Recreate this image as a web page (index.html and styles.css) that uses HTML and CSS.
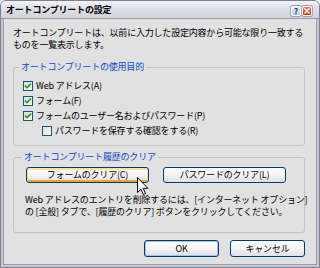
FILE: index.html
```html
<!DOCTYPE html>
<html lang="ja">
<head>
    <meta charset="UTF-8">
    <title>オートコンプリートの設定</title>
    <link rel="stylesheet" href="styles.css">
</head>
<body>
    <div class="ventana">
        <div class="barra">
            <span class="titulo">オートコンプリートの設定</span>
            <span class="boton-barra ayuda">?</span>
            <span class="boton-barra cerrar">
                <svg width="6" height="6" viewBox="0 0 6 6"><path d="M0.5 0.5 L5.5 5.5 M5.5 0.5 L0.5 5.5" stroke="#fff" stroke-width="1.4"/></svg>
            </span>
        </div>
        <div class="cliente">
            <p class="intro">オートコンプリートは、以前に入力した設定内容から可能な限り一致する<br>ものを一覧表示します。</p>

            <fieldset class="grupo grupo-uso">
                <legend>オートコンプリートの使用目的</legend>
                <div class="filas">
                    <div class="fila"><span class="caja"><svg width="8" height="8" viewBox="0 0 8 8"><polyline points="1,3.6 3,5.6 7,1.6" fill="none" stroke="#21a121" stroke-width="1.7"/></svg></span>Web アドレス(A)</div>
                    <div class="fila"><span class="caja"><svg width="8" height="8" viewBox="0 0 8 8"><polyline points="1,3.6 3,5.6 7,1.6" fill="none" stroke="#21a121" stroke-width="1.7"/></svg></span>フォーム(F)</div>
                    <div class="fila"><span class="caja"><svg width="8" height="8" viewBox="0 0 8 8"><polyline points="1,3.6 3,5.6 7,1.6" fill="none" stroke="#21a121" stroke-width="1.7"/></svg></span>フォームのユーザー名およびパスワード(P)</div>
                    <div class="fila sub"><span class="caja"></span>パスワードを保存する確認をする(R)</div>
                </div>
            </fieldset>

            <fieldset class="grupo grupo-borrar">
                <legend>オートコンプリート履歴のクリア</legend>
                <div class="botones-borrar">
                    <button class="boton foco">フォームのクリア(C)</button>
                    <button class="boton">パスワードのクリア(L)</button>
                </div>
                <p class="nota">Web アドレスのエントリを削除するには、[インターネット オプション]<br>の [全般] タブで、[履歴のクリア] ボタンをクリックしてください。</p>
            </fieldset>

            <div class="acciones">
                <button class="boton chico defecto">OK</button>
                <button class="boton chico">キャンセル</button>
            </div>
        </div>
        <svg class="cursor" width="12" height="19" viewBox="0 0 12 19"><path d="M0.5 0.5 V15.5 L4 12.2 L6.4 17.6 L8.6 16.6 L6.2 11.3 H10.8 Z" fill="#fff" stroke="#000" stroke-width="1"/></svg>
    </div>
</body>
</html>
```

FILE: styles.css
```css
* {
    box-sizing: border-box;
}

body {
    margin: 0;
    background: #fff;
}

.ventana {
    position: relative;
    width: 320px;
    height: 268px;
    display: flex;
    flex-direction: column;
    background: #c6c7d1;
    border: 1px solid #7f7f8e;
    border-radius: 6px 6px 0 0;
    overflow: hidden;
    font-family: "Noto Sans CJK JP", sans-serif;
    font-size: 9px;
    line-height: 10px;
    letter-spacing: -0.2px;
    color: #000;
}

.barra {
    height: 18px;
    display: flex;
    align-items: center;
    padding: 0 7px 0 5px;
    background: linear-gradient(#f2f3f7, #dfe0e8 45%, #d1d3dd);
    border-bottom: 1px solid #9a9aa8;
}

.titulo {
    flex: 1;
    font-weight: bold;
    white-space: nowrap;
}

.boton-barra {
    width: 10px;
    height: 10px;
    margin-left: 1px;
    margin-top: 3px;
    display: flex;
    align-items: center;
    justify-content: center;
    border: 1px solid #fff;
    border-radius: 2px;
    box-shadow: 0 0 0 1px #9da3b8;
    letter-spacing: 0;
}

.ayuda {
    background: linear-gradient(#eef1fa, #c3c9dc);
    color: #1b2f7a;
    font-weight: bold;
    font-size: 8px;
}

.cerrar {
    background: linear-gradient(#ee8a6c, #d4472a 60%, #c23a1f);
}

.cliente {
    flex: 1;
    margin: 0 2px 2px;
    padding: 8px 11px 0 9px;
    background: #e1e1e1;
    border: 1px solid #9a9aa8;
    border-top: none;
}

.intro {
    margin: 0;
    line-height: 12px;
    white-space: nowrap;
}

.grupo {
    margin: 11px 0 0;
    min-width: 0;
    border: 1px solid #c2c2c2;
    border-radius: 3px;
}

.grupo legend {
    margin-left: -4px;
    padding: 0 2px;
    color: #0a46d2;
    white-space: nowrap;
}

.grupo-uso {
    padding: 8px 9px 8px 9px;
}

.filas {
    display: flex;
    flex-direction: column;
    gap: 3px;
}

.fila {
    height: 12px;
    display: flex;
    align-items: center;
    gap: 3px;
    white-space: nowrap;
}

.fila.sub {
    margin-left: 19px;
}

.caja {
    width: 10px;
    height: 10px;
    display: flex;
    align-items: center;
    justify-content: center;
    border: 1px solid #1c5180;
    background: linear-gradient(135deg, #dcdcd6, #fbfbfb);
}

.grupo-borrar {
    margin-top: 6px;
    padding: 5px 9px 14px 12px;
}

.botones-borrar {
    display: flex;
    gap: 14px;
}

.boton {
    width: 123px;
    height: 16px;
    padding: 0;
    display: flex;
    align-items: center;
    justify-content: center;
    font: inherit;
    letter-spacing: inherit;
    color: #000;
    white-space: nowrap;
    border: 1px solid #003c74;
    border-radius: 3px;
    background: linear-gradient(#ffffff, #f4f4f4 50%, #e0e0e6);
}

.boton.foco {
    box-shadow: inset 0 1px 0 1px #fde0a2, inset 0 -1px 0 1px #f0a42c;
}

.boton.defecto {
    box-shadow: inset 0 0 0 1px #a6c0ec;
}

.boton.chico {
    width: 75px;
    height: 17px;
}

.nota {
    margin: 11px 0 0 -1px;
    line-height: 12px;
    white-space: nowrap;
}

.acciones {
    margin-top: 7px;
    display: flex;
    justify-content: flex-end;
    gap: 11px;
}

.cursor {
    position: absolute;
    left: 136px;
    top: 176px;
}
```
